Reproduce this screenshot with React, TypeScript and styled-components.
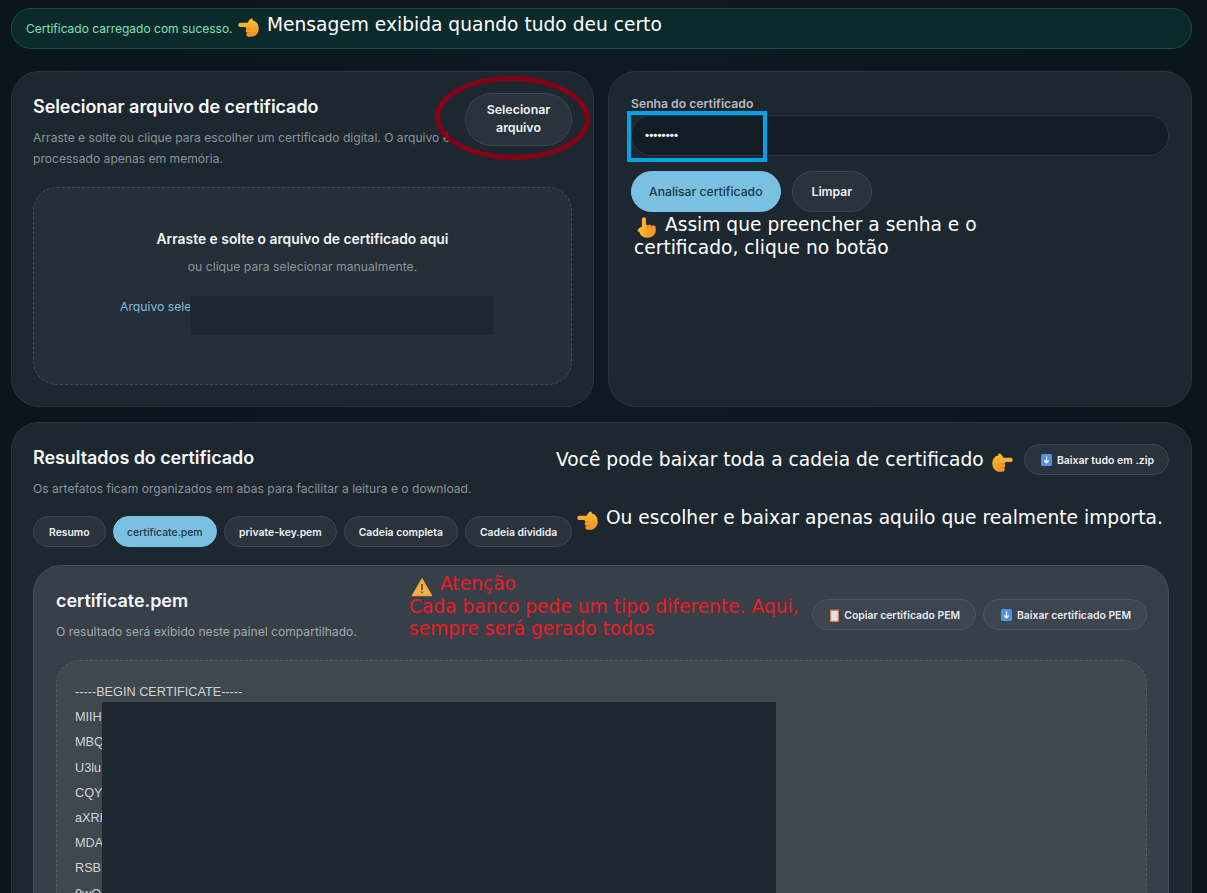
import styled, { createGlobalStyle } from 'styled-components';

const GlobalStyle = createGlobalStyle`
  html, body {
    margin: 0;
    height: 893px;
    overflow: hidden;
    background: linear-gradient(90deg, #0a151c 0, #0e1a23 50%, #0a151c 100%);
    font-family: Inter, "Liberation Sans", sans-serif;
  }
  * { box-sizing: border-box; }
`;

const Page = styled.div`
  position: relative;
  width: 1207px;
  height: 893px;
  overflow: hidden;
  padding: 8px 15px 0 11px;
`;

const Alert = styled.div`
  height: 41px;
  margin-bottom: 22px;
  padding: 0 14px;
  display: flex;
  align-items: center;
  border-radius: 20px;
  border: 1px solid #14503f;
  background: #0c2a2b;
  color: #7fe0b4;
  font-size: 12px;
`;

const TopGrid = styled.div`
  display: grid;
  grid-template-columns: 583px 584px;
  gap: 14px;
  margin-bottom: 15px;
`;

const Panel = styled.section<{ $pad?: string }>`
  background: #1d2730;
  border: 1px solid #2c3640;
  border-radius: 28px;
  padding: ${({ $pad }) => $pad || '22px 21px'};
`;

const UploadPanel = styled(Panel)`
  height: 336px;
`;

const HeaderRow = styled.div`
  display: flex;
  justify-content: space-between;
  align-items: flex-start;
  gap: 8px;
`;

const Title = styled.h2`
  margin: 1px 0 8px;
  font-size: 18px;
  line-height: 24px;
  font-weight: 600;
  letter-spacing: -0.07px;
  color: #f5f7f8;
`;

const Muted = styled.p`
  margin: 0;
  font-size: 12.1px;
  line-height: 21px;
  color: #8b939a;
`;

const Pill = styled.button<{ $active?: boolean }>`
  flex-shrink: 0;
  border-radius: 999px;
  border: 1px solid ${({ $active }) => ($active ? '#79c0e2' : '#3d4751')};
  background: ${({ $active }) => ($active ? '#79c0e2' : '#2a323c')};
  color: ${({ $active }) => ($active ? '#233645' : '#eef1f3')};
  font-family: inherit;
  font-size: 10.4px;
  font-weight: ${({ $active }) => ($active ? 500 : 600)};
  padding: 1px 15px 0;
  height: 31px;
  display: inline-flex;
  align-items: center;
  justify-content: center;
  gap: 5px;
  white-space: nowrap;
`;

const PickButton = styled(Pill)`
  width: 107px;
  height: 53px;
  margin-top: -1px;
  padding: 0 15px 2px;
  line-height: 18px;
  white-space: normal;
  font-size: 12.4px;
`;

const ZipButton = styled(Pill)`
  margin-top: -1px;
  padding: 1px 14px 0 16px;
  font-size: 10.5px;
`;

const DropZone = styled.div`
  margin-top: 18px;
  height: 198px;
  border: 1px dashed #434c56;
  border-radius: 24px;
  background: #262f38;
  padding: 40px 22px 0;
  text-align: center;
`;

const DropTitle = styled.div`
  font-size: 13.85px;
  line-height: 22px;
  font-weight: 600;
  color: #f2f4f6;
`;

const DropHint = styled(Muted)`
  margin-top: 6px;
  font-size: 12.2px;
`;

const FileBox = styled.div`
  margin-top: 10px;
  height: 55px;
  border-radius: 24px;
  border: 1px solid #22333f;
  background: #242f39;
  padding: 9px 0 0 63px;
  text-align: left;
  font-size: 12.2px;
  line-height: 20px;
  color: #7dbcdc;
`;

const Label = styled.label`
  display: block;
  font-size: 12.2px;
  line-height: 16px;
  font-weight: 600;
  color: #b4bac0;
  margin-bottom: 3px;
`;

const PasswordInput = styled.div`
  height: 41px;
  border-radius: 20px;
  border: 1px solid #2b3540;
  background: #141d26;
  color: #f0f3f5;
  padding: 0 13px;
  font-family: "Liberation Sans", sans-serif;
  font-size: 11.8px;
  font-weight: 700;
  line-height: 39px;
`;

const ActionRow = styled.div`
  display: flex;
  gap: 11px;
  margin-top: 15px;
`;

const ActionButton = styled(Pill)`
  height: 41px;
  padding: 0 ${({ $active }) => ($active ? 17 : 19)}px;
  font-size: 12.2px;
`;

const ResultsPanel = styled(Panel)`
  height: 620px;
`;

const Tabs = styled.div`
  display: flex;
  gap: 7px;
  margin-top: 17px;

  > :first-child {
    padding: 1px 15px 0;
  }
`;

const Tab = styled(Pill)`
  padding: 1px ${({ $active }) => ($active ? 13.5 : 14)}px 0;
`;

const InnerCard = styled.div`
  margin-top: 18px;
  background: #373f49;
  border: 1px solid #444d57;
  border-radius: 28px;
  padding: 22px 21px 22px 22px;
  height: 500px;
`;

const CardHeader = styled.div`
  display: flex;
  justify-content: space-between;
  align-items: flex-start;
`;

const CardActions = styled.div`
  display: flex;
  gap: 7px;
  margin-top: 11px;
`;

const CardPill = styled(Pill)`
  background: #3c4550;
  border-color: #4d5660;
  color: #e7eaec;
  padding: 1px 15px 0 17px;
`;

const CardMuted = styled(Muted)`
  color: #a1a8ae;
`;

const CodeBox = styled.div`
  margin-top: 18px;
  height: 400px;
  border: 1px dashed #56606a;
  border-radius: 24px;
  background: #3f474f;
  padding: 19px 18px;
  font-family: "Liberation Sans", Arial, sans-serif;
  font-size: 12.7px;
  line-height: 25.2px;
  color: #cfd3d6;
`;

const CodeLine = styled.div`
  white-space: nowrap;
`;

const Redact = styled.div<{ $x: number; $y: number; $w: number; $h: number }>`
  position: absolute;
  left: ${({ $x }) => $x}px;
  top: ${({ $y }) => $y}px;
  width: ${({ $w }) => $w}px;
  height: ${({ $h }) => $h}px;
  background: #1c2730;
`;

const Note = styled.div<{ $x: number; $y: number; $w?: number; $red?: boolean }>`
  position: absolute;
  left: ${({ $x }) => $x}px;
  top: ${({ $y }) => $y}px;
  width: ${({ $w }) => ($w ? `${$w}px` : 'auto')};
  white-space: ${({ $w }) => ($w ? 'normal' : 'nowrap')};
  font-family: "DejaVu Sans", sans-serif;
  font-size: 18.65px;
  line-height: 22.5px;
  color: ${({ $red }) => ($red ? '#ed1c24' : '#ffffff')};
`;

const BlueFrame = styled.div`
  position: absolute;
  left: 627px;
  top: 111px;
  width: 140px;
  height: 51px;
  border: 4px solid #00a2e8;
`;

const RedRing = styled.div`
  position: absolute;
  left: 435px;
  top: 76px;
  width: 155px;
  height: 84px;
  border: 5px solid #880015;
  border-radius: 50%;
  transform: rotate(1deg);
`;

const InlineIcon = styled.svg`
  display: inline-block;
  vertical-align: -3px;
`;

const EmojiIcon = styled.svg`
  display: inline-block;
  vertical-align: -5px;
  margin: -4px 0;
`;

// emoji drawing, the finger points left by default
function Hand({ rotate = 0, flip = false }: { rotate?: number; flip?: boolean }) {
  return (
    <EmojiIcon width={25} height={25} viewBox="-1.500 -1.500 27 27" style={{ transform: `rotate(${rotate}deg) scaleX(${flip ? -1 : 1})` }}>
      <defs>
        <linearGradient id="skin" x1="0" y1="0" x2="0" y2="1">
          <stop offset="0" stopColor="#fcc02c" />
          <stop offset="1" stopColor="#f6902a" />
        </linearGradient>
      </defs>
      <path d="M1 9.200C1 7.800 2 7 3.400 7H11C12 5.500 13 3.500 14.500 2.600 15.800 1.900 17 3 16.600 4.400 19.500 4.600 23 7.500 23 13 23 18.500 19.500 22 15 22H13C11 22 9.600 21 9.600 19.500 9.600 18.600 10 18 10.600 17.600 9.600 17.200 9 16.300 9 15.400 9 14.600 9.400 13.900 10 13.500 9.200 13.100 8.800 12.300 8.800 11.500H3.400C2 11.500 1 10.600 1 9.200Z" fill="url(#skin)" />
      <path d="M10 13.500h4M10.600 17.600h4" stroke="#d9801e" strokeWidth="1" fill="none" />
    </EmojiIcon>
  );
}

function Warning() {
  return (
    <EmojiIcon width={25} height={20} viewBox="0 0 25 20" style={{ verticalAlign: '-3px' }}>
      <path d="M13 2 22.500 18.500H3.500z" fill="#f6b04a" stroke="#f0a63c" strokeWidth="1.500" strokeLinejoin="round" />
      <path d="M13 7v6M13 14.500v1.800" stroke="#6a5430" strokeWidth="1.800" />
    </EmojiIcon>
  );
}

function DownloadIcon() {
  return (
    <InlineIcon width={11} height={12} viewBox="0 0 11 12">
      <rect width="11" height="12" rx="1.500" fill="#4f93e8" />
      <path d="M5.500 2.500v6M3.300 6.500l2.200 2.300 2.200-2.300" stroke="#fff" strokeWidth="1.300" fill="none" />
    </InlineIcon>
  );
}

function ClipboardIcon() {
  return (
    <InlineIcon width={9} height={13} viewBox="0 0 9 13">
      <rect y="0.500" width="9" height="12.500" rx="1" fill="#c9805f" />
      <rect x="1.200" y="2" width="6.600" height="9.800" fill="#e4dfe0" />
    </InlineIcon>
  );
}

const tabs = ['Resumo', 'certificate.pem', 'private-key.pem', 'Cadeia completa', 'Cadeia dividida'];
const certLines = ['-----BEGIN CERTIFICATE-----', 'MIIH', 'MBQ', 'U3lu', 'CQYI', 'aXRh', 'MDA', 'RSBI', '9wO'];

export default function App() {
  return (
    <Page>
      <GlobalStyle />

      <Alert>Certificado carregado com sucesso.</Alert>

      <TopGrid>
        <UploadPanel>
          <HeaderRow>
            <div>
              <Title>Selecionar arquivo de certificado</Title>
              <Muted>
                Arraste e solte ou clique para escolher um certificado digital. O arquivo é processado apenas em memória.
              </Muted>
            </div>
            <PickButton>Selecionar arquivo</PickButton>
          </HeaderRow>
          <DropZone>
            <DropTitle>Arraste e solte o arquivo de certificado aqui</DropTitle>
            <DropHint>ou clique para selecionar manualmente.</DropHint>
            <FileBox>Arquivo selecionado</FileBox>
          </DropZone>
        </UploadPanel>

        <UploadPanel $pad="24px 22px 0">
          <Label>Senha do certificado</Label>
          <PasswordInput>••••••••</PasswordInput>
          <ActionRow>
            <ActionButton $active>Analisar certificado</ActionButton>
            <ActionButton>Limpar</ActionButton>
          </ActionRow>
        </UploadPanel>
      </TopGrid>

      <ResultsPanel $pad="22px 22px 22px 21px">
        <HeaderRow>
          <div>
            <Title>Resultados do certificado</Title>
            <Muted>Os artefatos ficam organizados em abas para facilitar a leitura e o download.</Muted>
          </div>
          <ZipButton>
            <DownloadIcon />
            Baixar tudo em .zip
          </ZipButton>
        </HeaderRow>

        <Tabs>
          {tabs.map((tab) => (
            <Tab key={tab} $active={tab === 'certificate.pem'}>
              {tab}
            </Tab>
          ))}
        </Tabs>

        <InnerCard>
          <CardHeader>
            <div>
              <Title>certificate.pem</Title>
              <CardMuted>O resultado será exibido neste painel compartilhado.</CardMuted>
            </div>
            <CardActions>
              <CardPill>
                <ClipboardIcon />
                Copiar certificado PEM
              </CardPill>
              <CardPill>
                <DownloadIcon />
                Baixar certificado PEM
              </CardPill>
            </CardActions>
          </CardHeader>
          <CodeBox>
            {certLines.map((line) => (
              <CodeLine key={line}>{line}</CodeLine>
            ))}
          </CodeBox>
        </InnerCard>
      </ResultsPanel>

      <Redact $x={190} $y={296} $w={303} $h={39} />
      <Redact $x={102} $y={702} $w={674} $h={191} />

      <RedRing />
      <BlueFrame />

      <Note $x={236} $y={14}>
        <Hand /> Mensagem exibida quando tudo deu certo
      </Note>
      <Note $x={634} $y={214} $w={380}>
        <Hand rotate={-90} flip /> Assim que preencher a senha e o certificado, clique no botão
      </Note>
      <Note $x={556} $y={449}>
        Você pode baixar toda a cadeia de certificado <Hand flip />
      </Note>
      <Note $x={575} $y={507}>
        <Hand /> Ou escolher e baixar apenas aquilo que realmente importa.
      </Note>
      <Note $x={409} $y={573} $w={400} $red>
        <Warning /> Atenção
        <br />
        Cada banco pede um tipo diferente. Aqui, sempre será gerado todos
      </Note>
    </Page>
  );
}
